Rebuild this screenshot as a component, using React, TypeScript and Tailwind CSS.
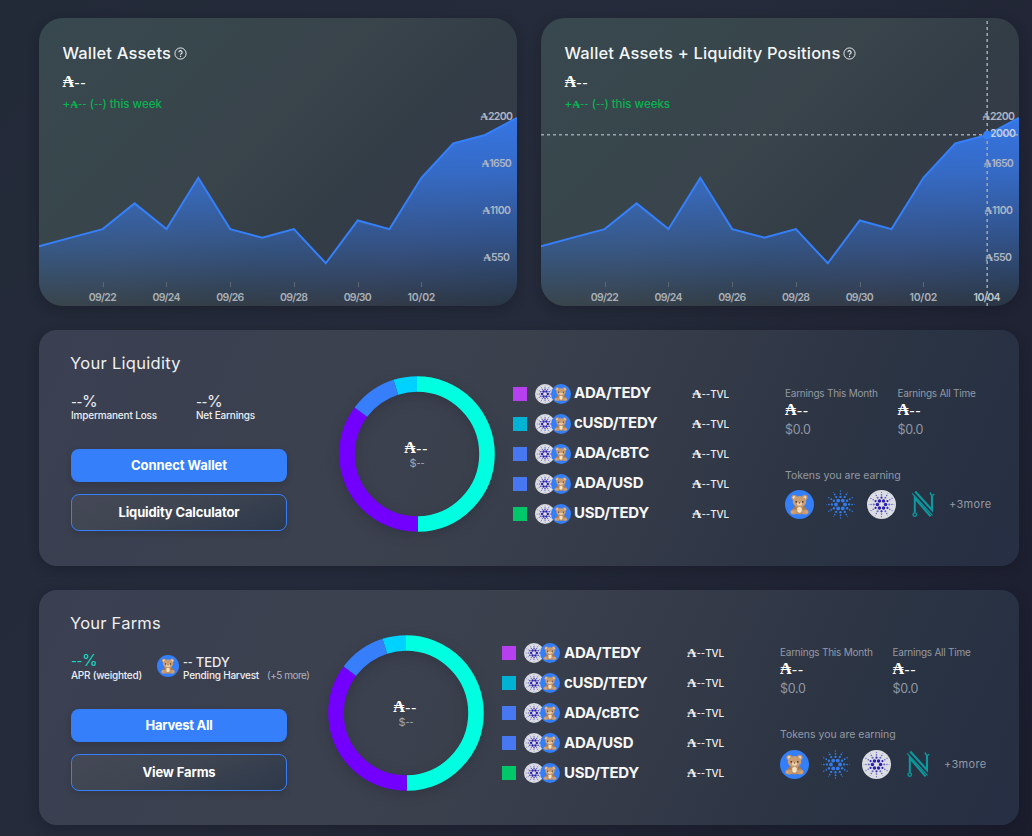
import type { ReactNode } from "react";

const LEVELS = [700, 800, 900, 1200, 900, 1500, 900, 800, 900, 500, 1000, 900, 1500, 1900, 2000, 2200];
const CHART_W = 478;
const CHART_H = 288;
const STEP = CHART_W / (LEVELS.length - 1);
const POINTS = LEVELS.map((v, i) => [i * STEP, 288 - v * 0.0855] as const);
const LINE = POINTS.map(([x, y]) => `${x.toFixed(1)},${y.toFixed(1)}`).join(" ");

const DAYS: [string, number][] = [
  ["09/22", 2],
  ["09/24", 4],
  ["09/26", 6],
  ["09/28", 8],
  ["09/30", 10],
  ["10/02", 12],
];

const PRICES: [string, number, number][] = [
  ["2200", 98, 25],
  ["1650", 145, 22.5],
  ["1100", 192, 21],
  ["550", 239, 19],
];

function Ada({ className = "" }: { className?: string }) {
  return <span className={`font-['Liberation_Serif',serif] font-bold ${className}`}>₳</span>;
}

function Dashes() {
  return <span className="font-['Lato',sans-serif]">--</span>;
}

function Chart({ id, crosshair = false }: { id: string; crosshair?: boolean }) {
  const label = { fontFamily: "Inter, sans-serif", fontSize: 10.5, fontWeight: 600 };
  return (
    <svg width={CHART_W} height={CHART_H} viewBox={`0 0 ${CHART_W} ${CHART_H}`} className="absolute inset-0">
      <defs>
        <linearGradient id={id} x1="0" y1="0" x2="0" y2="1">
          <stop offset="0" stopColor="#367df8" stopOpacity="0.88" />
          <stop offset="0.28" stopColor="#367df8" stopOpacity="0.72" />
          <stop offset="0.65" stopColor="#367df8" stopOpacity="0.37" />
          <stop offset="1" stopColor="#367df8" stopOpacity="0" />
        </linearGradient>
      </defs>
      <polygon points={`0,${CHART_H} ${LINE} ${CHART_W},${CHART_H}`} fill={`url(#${id})`} />
      <polyline points={LINE} fill="none" stroke="#3580fa" strokeWidth="2" />
      {DAYS.map(([day, i]) => (
        <g key={day}>
          <path d={`M${Math.round(i * STEP) + 0.5} 264v5`} stroke="#5d676f" strokeWidth="1" />
          <text x={i * STEP} y="283" textAnchor="middle" textLength="28" fill="#a9afb5" style={label}>
            {day}
          </text>
        </g>
      ))}
      {crosshair && (
        <g>
          <path d="M0 116.8H478M446.2 3V288" stroke="#9aa5b0" strokeWidth="1.6" strokeDasharray="3 3" fill="none" />
          <text x="446" y="283" textAnchor="middle" textLength="27" fill="#c0c6cc" style={label}>
            10/04
          </text>
          <text x="449" y="119" textLength="26" fill="#c0cfea" style={label}>
            2000
          </text>
        </g>
      )}
      {PRICES.map(([price, y, w]) => (
        <g key={price} fill="#aeb6c3">
          <text x={457.5 - (w + 7.5) / 2} y={y + 4} style={{ fontFamily: "Liberation Serif, serif", fontSize: 11, fontWeight: 700 }}>
            ₳
          </text>
          <text x={457.5 - (w + 7.5) / 2 + 7.7} y={y + 4} textLength={w} style={label}>
            {price}
          </text>
        </g>
      ))}
      {crosshair && <circle cx="446.3" cy="117" r="4.2" fill="#3580fa" />}
    </svg>
  );
}

function Help() {
  return (
    <svg width="13" height="13" viewBox="0 0 13 13" fill="none" stroke="#e6e9eb" className="mt-px shrink-0">
      <circle cx="6.5" cy="6.5" r="5.6" strokeWidth="1" />
      <path d="M4.9 5.2a1.6 1.6 0 1 1 2.3 1.5c-.5.3-.7.5-.7 1.1" strokeWidth="1.2" />
      <path d="M6.5 8.7v1.2" strokeWidth="1.2" />
    </svg>
  );
}

function WalletCard({ id, title, note, titleClass, noteClass, crosshair }: { id: string; title: string; note: string; titleClass: string; noteClass: string; crosshair?: boolean }) {
  return (
    <section className="relative h-[288px] w-[478px] overflow-hidden rounded-[24px] bg-[linear-gradient(135deg,#38484f_0%,#37474c_22%,#39444b_43%,#323d46_62%,#343b48_78%,#293542_100%)] shadow-[0_4px_12px_rgba(15,18,30,0.3)]">
      <Chart id={id} crosshair={crosshair} />
      <div className="relative flex flex-col items-start pt-[25px] pl-[23.5px]">
        <div className="flex h-5 items-center gap-[3px]">
          <h2 className={`text-[16.5px] leading-5 font-medium text-[#f3f5f6] ${titleClass}`}>{title}</h2>
          <Help />
        </div>
        <div className="mt-[9px] flex h-5 items-center text-base leading-5 text-white">
          <Ada />
          <Dashes />
        </div>
        <div className={`mt-[3px] flex h-[18px] items-center text-[11.5px] leading-[18px] font-medium whitespace-pre text-[#08b351] ${noteClass}`}>
          +<Ada className="text-[11px]" />
          <Dashes /> (<Dashes />) {note}
        </div>
      </div>
    </section>
  );
}

function Bear({ size }: { size: number }) {
  return (
    <svg width={size} height={size} viewBox="0 0 30 30" className="shrink-0">
      <circle cx="15" cy="15" r="15" fill="#347ff8" />
      <circle cx="9.5" cy="7.8" r="2.9" fill="#c1936c" />
      <circle cx="20.5" cy="7.8" r="2.9" fill="#c1936c" />
      <circle cx="9.4" cy="7.8" r="1.5" fill="#f0d9b5" />
      <circle cx="20.6" cy="7.8" r="1.5" fill="#f0d9b5" />
      <ellipse cx="15" cy="20" rx="5.6" ry="5.4" fill="#bb8b63" />
      <path d="M10.2 16.5 7 20.5l2 1.5 3-3zM19.8 16.5l3.2 4-2 1.5-3-3z" fill="#a87850" />
      <ellipse cx="9.2" cy="22.8" rx="3.6" ry="2.6" fill="#c8996e" />
      <ellipse cx="20.8" cy="22.8" rx="3.6" ry="2.6" fill="#c8996e" />
      <circle cx="7.8" cy="22.8" r="1.2" fill="#d6a97c" />
      <circle cx="22.2" cy="22.8" r="1.2" fill="#d6a97c" />
      <path d="M12.6 18.5q2.4-2 4.8 0l-.3 4q-2 2-4.2 0z" fill="#f6e5c4" />
      <ellipse cx="15" cy="12" rx="7" ry="5.7" fill="#c99c72" />
      <ellipse cx="15" cy="14.2" rx="2.7" ry="2.1" fill="#f0d4ac" />
      <circle cx="11.6" cy="12.2" r=".9" fill="#4b352b" />
      <circle cx="18.4" cy="12.2" r=".9" fill="#4b352b" />
      <ellipse cx="15" cy="13.3" rx="1" ry=".7" fill="#4b352b" />
    </svg>
  );
}

const RINGS: [number, number, number, number][] = [
  [6, 4.7, 2, 0],
  [6, 7.9, 1.25, 30],
  [6, 8.9, 1.2, 0],
  [6, 11, 0.95, 30],
  [6, 12, 0.9, 0],
  [6, 14, 0.75, 30],
  [6, 14.4, 0.5, 0],
];

function Cardano({ size, filled = false }: { size: number; filled?: boolean }) {
  const scale = filled ? 0.9 : 1;
  return (
    <svg width={size} height={size} viewBox="0 0 30 30" className="shrink-0">
      {filled && <circle cx="15" cy="15" r="15" fill="#dcdde2" />}
      {RINGS.map(([n, radius, r, start], ring) =>
        Array.from({ length: n }, (_, i) => {
          const a = ((start + (360 / n) * i) * Math.PI) / 180;
          return (
            <circle
              key={`${ring}-${i}`}
              cx={15 + scale * radius * Math.cos(a)}
              cy={15 + scale * radius * Math.sin(a)}
              r={r * scale}
              fill={filled ? (ring < 2 ? "#2a1fae" : "#6467c8") : "#347be8"}
            />
          );
        }),
      )}
    </svg>
  );
}

function Nmkr() {
  return (
    <svg width="24" height="28" viewBox="0 0 24 28" fill="none" stroke="#0b9a9e" className="shrink-0">
      <path d="M3.8 22.6V8L19.5 26.4" strokeWidth="2" />
      <path d="M4.2 1.5 21 20V5.8" strokeWidth="2.1" />
      <path d="M1.2 3.4 21.5 25.4" strokeWidth="1.2" />
      <circle cx="3.8" cy="24.6" r="1.8" strokeWidth="1.3" />
      <path d="M19.6 2.4a1.9 1.9 0 1 0 3.6 1.6" strokeWidth="1.4" />
    </svg>
  );
}

const SLICES: [string, number, number][] = [
  ["#00ffe1", 0, 49.8],
  ["#7300ff", 49.8, 85.2],
  ["#367efa", 85.2, 95.1],
  ["#00d2ff", 95.1, 100],
];

function Donut() {
  return (
    <div className="relative h-[156px] w-[156px] shrink-0">
      <svg width="156" height="156" viewBox="0 0 156 156" className="absolute inset-0 overflow-visible drop-shadow-[0_4px_6px_rgba(20,24,36,0.25)]">
        <g transform="rotate(-90 78 78)">
          {SLICES.map(([color, from, to]) => (
            <circle key={color} cx="78" cy="78" r="70" fill="none" stroke={color} strokeWidth="15.6" pathLength="100" strokeDasharray={`${to - from} ${100 - to + from}`} strokeDashoffset={-from} />
          ))}
        </g>
      </svg>
      <div className="relative flex h-full flex-col items-center pt-[62px] pr-0.5">
        <div className="flex h-5 items-center text-base leading-5 text-white">
          <Ada />
          <Dashes />
        </div>
        <div className="-mt-px flex h-3 items-center pl-0.5 text-[11px] leading-3 text-[#a3a8b2]">
          $<Dashes />
        </div>
      </div>
    </div>
  );
}

const PAIRS = [
  { name: "ADA/TEDY", box: "bg-[#b63fef]", text: "tracking-[-0.23px]" },
  { name: "cUSD/TEDY", box: "bg-[#00b2d4]", text: "tracking-[-0.27px]" },
  { name: "ADA/cBTC", box: "bg-[#4777f1]", text: "tracking-[-0.27px]" },
  { name: "ADA/USD", box: "bg-[#4777f1]", text: "tracking-[-0.1px]" },
  { name: "USD/TEDY", box: "bg-[#00c76a]", text: "tracking-[-0.27px]" },
];

function PairList({ nameClass }: { nameClass: string }) {
  return (
    <ul className="flex flex-col">
      {PAIRS.map((p) => (
        <li key={p.name} className="flex h-[30px] items-center">
          <span className={`size-[14px] shrink-0 ${p.box}`} />
          <span className="ml-2 flex shrink-0">
            <Cardano size={20} filled />
            <span className="-ml-1 flex">
              <Bear size={20} />
            </span>
          </span>
          <span className={`shrink-0 text-[15px] leading-5 font-bold text-[#f6f7f8] ${nameClass} ${p.text}`}>{p.name}</span>
          <span className="flex items-center pb-px text-[12px] leading-4 text-[#eceef0]">
            <Ada className="text-[13px]" />
            <Dashes />
            <span className="text-[10px] font-medium tracking-[-0.26px]">TVL</span>
          </span>
        </li>
      ))}
    </ul>
  );
}

function Earning({ label, width }: { label: string; width: string }) {
  return (
    <div className={`flex flex-col ${width}`}>
      <span className="h-3 text-[10px] leading-3 tracking-[-0.23px] whitespace-nowrap text-[#9399a4]">{label}</span>
      <span className="mt-px flex h-5 items-center text-base leading-5 text-white">
        <Ada />
        <Dashes />
      </span>
      <span className="mt-px h-[18px] text-[12.5px] leading-[18px] tracking-[-0.3px] text-[#9097a3]">$0.0</span>
    </div>
  );
}

function Earnings({ tokensClass }: { tokensClass: string }) {
  return (
    <div className="flex flex-col">
      <div className="flex">
        <Earning label="Earnings This Month" width="w-[112.5px]" />
        <Earning label="Earnings All Time" width="w-[90px]" />
      </div>
      <span className="mt-[29px] h-4 text-[10.5px] leading-4 tracking-[-0.02px] text-[#9399a4]">Tokens you are earning</span>
      <div className={`flex h-[30px] items-center ${tokensClass}`}>
        <Bear size={29} />
        <span className="ml-3 flex">
          <Cardano size={29} />
        </span>
        <span className="ml-3 flex">
          <Cardano size={29} filled />
        </span>
        <span className="ml-[15px] flex">
          <Nmkr />
        </span>
        <span className="ml-[14px] text-[11px] leading-4 tracking-[0.3px] text-[#9399a4]">+3more</span>
      </div>
    </div>
  );
}

function Actions({ primary, secondary, a, b }: { primary: string; secondary: string; a: string; b: string }) {
  return (
    <div className="flex w-[216px] flex-col gap-3">
      <button className={`h-[33px] rounded-lg bg-[#367ffa] text-[13px] font-bold text-white shadow-[0_3px_6px_rgba(20,24,36,0.25)] ${a}`}>{primary}</button>
      <button className={`h-[37px] rounded-lg border border-[#367ffa] bg-[linear-gradient(160deg,#454957_0%,#3f4551_45%,#2c384a_100%)] text-[13px] font-bold text-white shadow-[0_3px_6px_rgba(20,24,36,0.2)] ${b}`}>
        {secondary}
      </button>
    </div>
  );
}

function Stat({ label, className, labelClass, children }: { label: string; className: string; labelClass: string; children: ReactNode }) {
  return (
    <div className={`flex flex-col ${className}`}>
      <span className="flex h-[19px] items-center">{children}</span>
      <span className={`-mt-px h-3 text-[10px] leading-3 font-medium whitespace-nowrap text-[#eceef1] ${labelClass}`}>{label}</span>
    </div>
  );
}

function Panel({ height, title, children }: { height: string; title: ReactNode; children: ReactNode }) {
  return (
    <section className={`flex w-[980px] items-start rounded-[18px] bg-[linear-gradient(115deg,#3a3f52_0%,#3c414f_30%,#3b404d_45%,#343a48_62%,#2b3443_80%,#262f43_100%)] pl-8 shadow-[0_4px_12px_rgba(15,18,30,0.3)] ${height}`}>
      {title}
      {children}
    </section>
  );
}

export default function App() {
  return (
    <main className="flex h-[836px] w-[1032px] flex-col gap-6 overflow-hidden bg-[linear-gradient(125deg,#222937_0%,#252b3a_45%,#1b1d2d_100%)] pt-[18px] pl-[39px] font-['Inter',sans-serif]">
      <div className="flex gap-6">
        <WalletCard id="assets" title="Wallet Assets" note="this week" titleClass="tracking-[0.16px]" noteClass="tracking-[-0.02px]" />
        <WalletCard id="positions" title="Wallet Assets + Liquidity Positions" note="this weeks" titleClass="tracking-[0.16px]" noteClass="tracking-[-0.02px]" crosshair />
      </div>

      <Panel
        height="h-[236px]"
        title={
          <div className="flex w-[268px] flex-col pt-[23px]">
            <h2 className="-ml-px h-5 text-[16.5px] leading-5 tracking-[0.3px] text-[#eef0f2]">Your Liquidity</h2>
            <div className="mt-[18px] mb-[28px] flex">
              <Stat label="Impermanent Loss" className="w-[125px]" labelClass="tracking-[-0.17px]">
                <span className="text-base leading-5 tracking-[-0.4px] text-[#eceef1]"><Dashes />%</span>
              </Stat>
              <Stat label="Net Earnings" className="w-[70px]" labelClass="tracking-[-0.2px]">
                <span className="text-base leading-5 tracking-[-0.4px] text-[#eceef1]"><Dashes />%</span>
              </Stat>
            </div>
            <Actions primary="Connect Wallet" secondary="Liquidity Calculator" a="tracking-[-0.06px]" b="tracking-[-0.14px]" />
          </div>
        }
      >
        <div className="flex pt-[46px]">
          <Donut />
        </div>
        <div className="ml-[18px] w-[272px] pt-[49px]">
          <PairList nameClass="ml-[3px] w-[118px] pb-[1.5px]" />
        </div>
        <div className="pt-[57px]">
          <Earnings tokensClass="mt-[5px]" />
        </div>
      </Panel>

      <Panel
        height="h-[235px]"
        title={
          <div className="flex w-[257px] flex-col pt-[23px]">
            <h2 className="-ml-px h-5 text-[16.5px] leading-5 tracking-[0.23px] text-[#eef0f2]">Your Farms</h2>
            <div className="mt-[18px] mb-[28px] flex">
              <Stat label="APR (weighted)" className="w-[86px]" labelClass="tracking-[-0.23px]">
                <span className="pb-0.5 text-base leading-5 tracking-[-0.4px] text-[#12d9c0]"><Dashes />%</span>
              </Stat>
              <span className="mt-1 mr-1 flex">
                <Bear size={22} />
              </span>
              <Stat label="Pending Harvest" className="w-[84px]" labelClass="tracking-[-0.21px]">
                <span className="pt-0.5 text-[13px] leading-4 font-medium tracking-[-0.11px] whitespace-pre text-[#eceef1]"><Dashes /> TEDY</span>
              </Stat>
              <span className="mt-[18px] h-3 text-[10px] leading-3 tracking-[-0.49px] whitespace-nowrap text-[#b0b4bd]">(+5 more)</span>
            </div>
            <Actions primary="Harvest All" secondary="View Farms" a="tracking-[-0.27px]" b="tracking-[-0.14px]" />
          </div>
        }
      >
        <div className="flex pt-[45px]">
          <Donut />
        </div>
        <div className="ml-[18px] w-[278px] pt-[48px]">
          <PairList nameClass="ml-1 w-[123px]" />
        </div>
        <div className="pt-[56px]">
          <Earnings tokensClass="mt-[6px]" />
        </div>
      </Panel>
    </main>
  );
}
